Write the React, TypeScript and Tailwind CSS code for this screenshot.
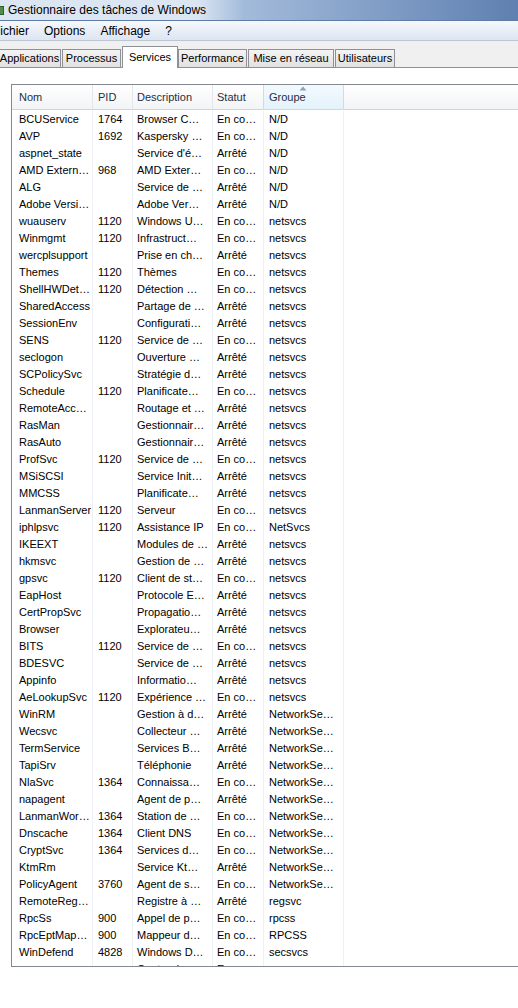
import React from "react";

type Row = [string, string, string, string, string];

const rows: Row[] = [
  ["BCUService", "1764", "Browser C…", "En co…", "N/D"],
  ["AVP", "1692", "Kaspersky …", "En co…", "N/D"],
  ["aspnet_state", "", "Service d'é…", "Arrêté", "N/D"],
  ["AMD Extern…", "968", "AMD Exter…", "En co…", "N/D"],
  ["ALG", "", "Service de …", "Arrêté", "N/D"],
  ["Adobe Versi…", "", "Adobe Ver…", "Arrêté", "N/D"],
  ["wuauserv", "1120", "Windows U…", "En co…", "netsvcs"],
  ["Winmgmt", "1120", "Infrastruct…", "En co…", "netsvcs"],
  ["wercplsupport", "", "Prise en ch…", "Arrêté", "netsvcs"],
  ["Themes", "1120", "Thèmes", "En co…", "netsvcs"],
  ["ShellHWDet…", "1120", "Détection …", "En co…", "netsvcs"],
  ["SharedAccess", "", "Partage de …", "Arrêté", "netsvcs"],
  ["SessionEnv", "", "Configurati…", "Arrêté", "netsvcs"],
  ["SENS", "1120", "Service de …", "En co…", "netsvcs"],
  ["seclogon", "", "Ouverture …", "Arrêté", "netsvcs"],
  ["SCPolicySvc", "", "Stratégie d…", "Arrêté", "netsvcs"],
  ["Schedule", "1120", "Planificate…", "En co…", "netsvcs"],
  ["RemoteAcc…", "", "Routage et …", "Arrêté", "netsvcs"],
  ["RasMan", "", "Gestionnair…", "Arrêté", "netsvcs"],
  ["RasAuto", "", "Gestionnair…", "Arrêté", "netsvcs"],
  ["ProfSvc", "1120", "Service de …", "En co…", "netsvcs"],
  ["MSiSCSI", "", "Service Init…", "Arrêté", "netsvcs"],
  ["MMCSS", "", "Planificate…", "Arrêté", "netsvcs"],
  ["LanmanServer", "1120", "Serveur", "En co…", "netsvcs"],
  ["iphlpsvc", "1120", "Assistance IP", "En co…", "NetSvcs"],
  ["IKEEXT", "", "Modules de …", "Arrêté", "netsvcs"],
  ["hkmsvc", "", "Gestion de …", "Arrêté", "netsvcs"],
  ["gpsvc", "1120", "Client de st…", "En co…", "netsvcs"],
  ["EapHost", "", "Protocole E…", "Arrêté", "netsvcs"],
  ["CertPropSvc", "", "Propagatio…", "Arrêté", "netsvcs"],
  ["Browser", "", "Explorateu…", "Arrêté", "netsvcs"],
  ["BITS", "1120", "Service de …", "En co…", "netsvcs"],
  ["BDESVC", "", "Service de …", "Arrêté", "netsvcs"],
  ["Appinfo", "", "Informatio…", "Arrêté", "netsvcs"],
  ["AeLookupSvc", "1120", "Expérience …", "En co…", "netsvcs"],
  ["WinRM", "", "Gestion à d…", "Arrêté", "NetworkSe…"],
  ["Wecsvc", "", "Collecteur …", "Arrêté", "NetworkSe…"],
  ["TermService", "", "Services B…", "Arrêté", "NetworkSe…"],
  ["TapiSrv", "", "Téléphonie", "Arrêté", "NetworkSe…"],
  ["NlaSvc", "1364", "Connaissa…", "En co…", "NetworkSe…"],
  ["napagent", "", "Agent de p…", "Arrêté", "NetworkSe…"],
  ["LanmanWor…", "1364", "Station de …", "En co…", "NetworkSe…"],
  ["Dnscache", "1364", "Client DNS", "En co…", "NetworkSe…"],
  ["CryptSvc", "1364", "Services d…", "En co…", "NetworkSe…"],
  ["KtmRm", "", "Service Kt…", "Arrêté", "NetworkSe…"],
  ["PolicyAgent", "3760", "Agent de s…", "En co…", "NetworkSe…"],
  ["RemoteReg…", "", "Registre à …", "Arrêté", "regsvc"],
  ["RpcSs", "900", "Appel de p…", "En co…", "rpcss"],
  ["RpcEptMap…", "900", "Mappeur d…", "En co…", "RPCSS"],
  ["WinDefend", "4828", "Windows D…", "En co…", "secsvcs"],
  ["wscsvc", "", "Centre de …", "En co…", "secsvcs"],
];

const tabs = [
  { label: "Applications", w: "w-[64px]" },
  { label: "Processus", w: "w-[60px]" },
  { label: "Services", w: "w-[56px]", active: true },
  { label: "Performance", w: "w-[70px]" },
  { label: "Mise en réseau", w: "w-[87px]" },
  { label: "Utilisateurs", w: "w-[61px]" },
];

const cols = "grid grid-cols-[81px_40px_80px_51px_80px]";

const App: React.FC = () => {
  return (
    <div className="w-[518px] h-[1008px] overflow-hidden bg-white font-['Liberation_Sans',Arial,sans-serif] text-black">
      {/* title bar */}
      <div className="relative h-[21px] flex items-center border-b border-[#5d7ca6] bg-linear-to-r from-[#dce6f2] from-38% via-[#a3bbdb] via-47% to-[#5f80b0]">
        <div className="w-[4px] h-[9px] mr-[4px] bg-[#4f8f4a] border-y border-r border-[#2f5d2c]" />
        <span className="text-[12px] leading-none">Gestionnaire des tâches de Windows</span>
      </div>

      {/* menu bar */}
      <div className="h-[20px] flex items-center text-[12px] border-b border-[#bcc6d3] bg-linear-to-b from-[#f6f8fc] to-[#dce5f1] overflow-hidden">
        <span className="-ml-[7px]">Fichier</span>
        <span className="ml-[15px]">Options</span>
        <span className="ml-[15px]">Affichage</span>
        <span className="ml-[15px]">?</span>
      </div>

      {/* tabs */}
      <div className="h-[27px] flex items-end bg-[#f0f0f0] text-[11px]">
        <div className="flex items-end -ml-[2px]">
          {tabs.map((t) =>
            t.active ? (
              <div
                key={t.label}
                className={`${t.w} h-[22px] bg-white border border-b-0 border-[#8e9096] flex justify-center pt-[2px]`}
              >
                {t.label}
              </div>
            ) : (
              <div
                key={t.label}
                className={`${t.w} h-[19px] border-b border-[#8e9096] flex`}
              >
                <div className="flex-1 mr-[1px] border border-b-0 border-[#8e9096] bg-linear-to-b from-[#f4f4f4] to-[#e1e1e1] flex items-center justify-center">
                  {t.label}
                </div>
              </div>
            )
          )}
        </div>
        <div className="flex-1 h-[1px] bg-[#8e9096]" />
      </div>

      {/* panel */}
      <div className="pt-[16px] pl-[11px]">
        <div className="h-[883px] overflow-hidden border-y border-l border-[#828790] text-[11px]">
          {/* header */}
          <div className="h-[25px] flex border-b border-[#d5d5d5] bg-linear-to-b from-white to-[#f3f4f6] text-[#1e2f45]">
            <div className={cols}>
              <div className="border-r border-[#e3e6ea] pl-[7px] flex items-center">Nom</div>
              <div className="border-r border-[#e3e6ea] pl-[5px] flex items-center">PID</div>
              <div className="border-r border-[#e3e6ea] pl-[4px] flex items-center">Description</div>
              <div className="pl-[4px] flex items-center border-r border-[#bfe1f4]">Statut</div>
              <div className="relative pl-[5px] flex items-center border-r border-[#bfe1f4] bg-linear-to-b from-[#f3fafe] to-[#e3f2fb]">
                <svg
                  className="absolute top-[1px] left-[35px]"
                  width="8"
                  height="5"
                  viewBox="0 0 8 5"
                >
                  <path d="M4 0.5 L7.5 4.5 L0.5 4.5 Z" fill="#8aa3bf" />
                </svg>
                Groupe
              </div>
            </div>
          </div>

          {/* rows */}
          <div className="pt-[1px]">
            {rows.map((r, i) => (
              <div key={i} className={`${cols} h-[17px] leading-[17px] whitespace-nowrap`}>
                <div className="border-r border-[#edf0f4] pl-[7px] overflow-hidden">{r[0]}</div>
                <div className="border-r border-[#edf0f4] pl-[5px] overflow-hidden">{r[1]}</div>
                <div className="border-r border-[#edf0f4] pl-[4px] overflow-hidden">{r[2]}</div>
                <div className="border-r border-[#edf0f4] pl-[4px] overflow-hidden">{r[3]}</div>
                <div className="border-r border-[#edf0f4] pl-[5px] overflow-hidden">{r[4]}</div>
              </div>
            ))}
          </div>
        </div>
      </div>
    </div>
  );
};

export default App;
